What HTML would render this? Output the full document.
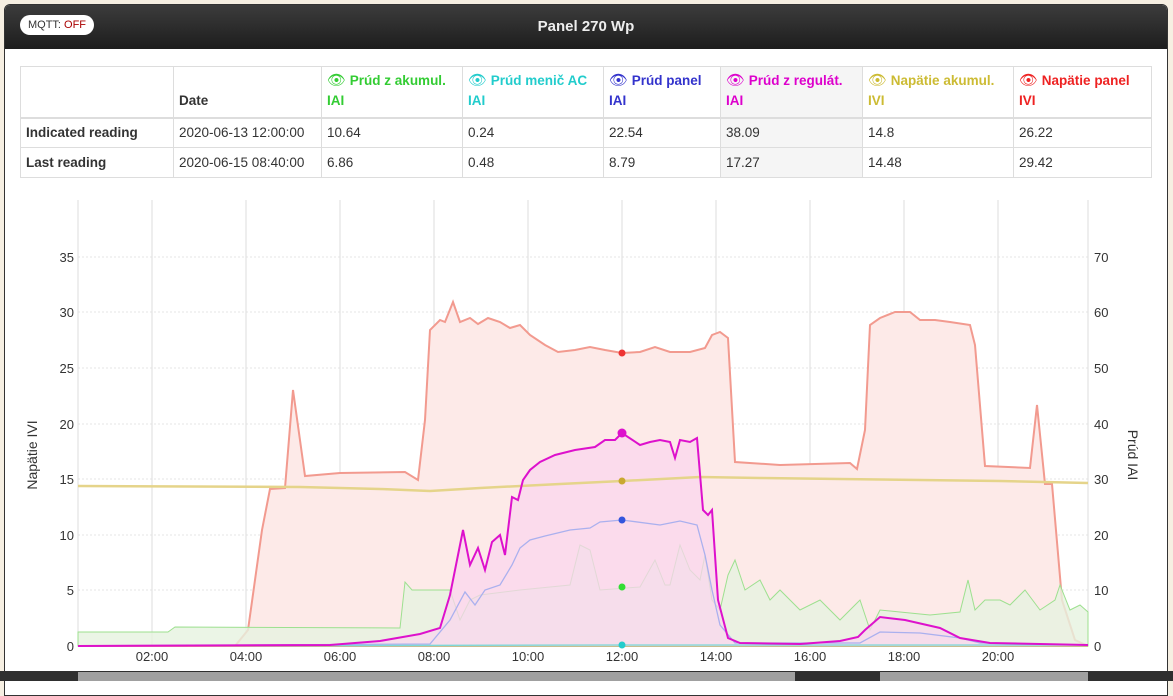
<!DOCTYPE html>
<html><head><meta charset="utf-8"><style>
html,body{margin:0;padding:0;width:1173px;height:681px;overflow:hidden;background:#f6efe2;font-family:"Liberation Sans",Arial,sans-serif}
.panel{position:absolute;left:4px;top:4px;width:1162px;height:690px;background:#fff;border:1px solid #333;border-radius:6px 6px 0 0;overflow:hidden}
.hdr{height:44px;background:linear-gradient(#3c3c3c,#1d1d1d);position:relative}
.hdr .t{position:absolute;left:0;right:0;top:13px;text-align:center;color:#eee;font-weight:bold;font-size:15px}
.pill{position:absolute;left:15px;top:10px;width:74px;height:20px;border-radius:10px;background:#fff;font-size:11px;line-height:20px;text-align:center;color:#333}
.pill b{font-weight:normal;color:#a00}
table{position:absolute;left:15px;top:61px;border-collapse:collapse;font-size:13.5px;color:#333}
td{border:1px solid #ddd;padding:0 5px;height:30px;vertical-align:middle;box-sizing:border-box}
tr.h td{height:51px;vertical-align:bottom;font-weight:bold;padding-bottom:6px;line-height:20px;border-bottom:2px solid #ddd}
.g{background:#f5f5f5}
.e{font-size:15px;font-weight:normal}
</style></head><body>
<div class="panel">
<div class="hdr"><div class="pill">MQTT: <b>OFF</b></div><div class="t">Panel 270 Wp</div></div>
<table>
<tr class="h"><td style="width:153px"></td><td style="width:148px">Date</td>
<td style="width:141px;color:#3c3"><span class="e">👁</span> Prúd z akumul.<br>IAI</td>
<td style="width:141px;color:#2cc"><span class="e">👁</span> Prúd menič AC<br>IAI</td>
<td style="width:117px;color:#33c"><span class="e">👁</span> Prúd panel<br>IAI</td>
<td class="g" style="width:142px;color:#d0c"><span class="e">👁</span> Prúd z regulát.<br>IAI</td>
<td style="width:151px;color:#cb3"><span class="e">👁</span> Napätie akumul.<br>IVI</td>
<td style="width:138px;color:#e22"><span class="e">👁</span> Napätie panel<br>IVI</td></tr>
<tr><td><b>Indicated reading</b></td><td>2020-06-13 12:00:00</td><td>10.64</td><td>0.24</td><td>22.54</td><td class="g">38.09</td><td>14.8</td><td>26.22</td></tr>
<tr><td><b>Last reading</b></td><td>2020-06-15 08:40:00</td><td>6.86</td><td>0.48</td><td>8.79</td><td class="g">17.27</td><td>14.48</td><td>29.42</td></tr>
</table>
</div>
<svg style="position:absolute;left:0;top:0" width="1173" height="681" font-family="Liberation Sans,Arial,sans-serif" font-size="13" fill="#333">
<g stroke="#e6e6e6" stroke-dasharray="2,2"><line x1="78" x2="1088" y1="590" y2="590"/><line x1="78" x2="1088" y1="535" y2="535"/><line x1="78" x2="1088" y1="479" y2="479"/><line x1="78" x2="1088" y1="424" y2="424"/><line x1="78" x2="1088" y1="368" y2="368"/><line x1="78" x2="1088" y1="312" y2="312"/><line x1="78" x2="1088" y1="257" y2="257"/></g>
<g stroke="#ddd"><line x1="78" x2="78" y1="200" y2="646"/><line x1="152" x2="152" y1="200" y2="646"/><line x1="246" x2="246" y1="200" y2="646"/><line x1="340" x2="340" y1="200" y2="646"/><line x1="434" x2="434" y1="200" y2="646"/><line x1="528" x2="528" y1="200" y2="646"/><line x1="622" x2="622" y1="200" y2="646"/><line x1="716" x2="716" y1="200" y2="646"/><line x1="810" x2="810" y1="200" y2="646"/><line x1="904" x2="904" y1="200" y2="646"/><line x1="998" x2="998" y1="200" y2="646"/><line x1="1088" x2="1088" y1="200" y2="646"/></g>
<polygon fill="#fdeae8" stroke="#f29a8f" stroke-width="2" points="78,646 235,646 248,630 262,530 270,489 285,488 293,390 305,476 340,473 405,472 418,480 425,420 430,330 440,320 445,322 453,302 460,322 470,318 478,324 488,318 500,322 510,328 520,325 530,335 545,345 558,352 575,350 590,347 605,350 622,353 640,352 655,347 670,352 690,352 705,348 712,335 720,332 728,338 735,462 780,465 850,463 857,469 865,430 870,325 880,318 895,312 910,312 920,320 935,320 950,322 970,325 975,345 985,466 1030,468 1037,405 1045,484 1052,484 1062,600 1075,640 1088,646"/>
<polygon fill="#e6f3e0" fill-opacity="0.8" stroke="#9de08f" points="78,646 78,632 168,632 175,627 400,628 405,582 412,590 450,590 460,620 470,600 480,595 520,590 540,588 570,585 580,545 590,550 600,590 640,587 655,560 665,585 670,585 680,545 690,570 700,580 705,555 712,600 720,610 728,575 735,560 745,590 760,580 770,600 780,590 800,610 820,600 840,620 855,605 860,600 870,630 880,610 900,612 930,615 960,612 968,580 975,610 985,600 1000,600 1010,605 1025,590 1040,610 1055,600 1060,585 1070,610 1080,605 1088,612 1088,646"/>
<polygon fill="#f9d5ee" fill-opacity="0.75" points="78,646 330,645 380,641 420,634 440,628 450,595 463,530 470,565 478,548 485,570 492,542 500,535 505,555 512,497 518,500 523,480 530,470 540,462 555,455 575,450 595,447 605,440 615,440 622,433 640,445 650,442 660,440 670,442 675,458 680,440 690,442 697,438 703,510 708,515 712,510 718,600 728,638 740,643 800,644 840,641 858,637 865,630 880,617 905,620 940,628 960,638 990,643 1088,645 1088,646"/>
<polyline fill="none" stroke="#e5d48a" stroke-width="2.5" points="78,486 300,487 380,489 430,491 480,488 560,484 622,481 700,477 760,478 840,479 920,480 1000,481 1088,483"/>
<polyline fill="none" stroke="#aab0ee" stroke-width="1.3" points="78,646 430,644 450,620 465,592 475,605 485,590 500,585 512,565 520,548 530,540 545,536 570,530 590,528 600,522 622,520 660,525 680,521 697,525 705,555 712,590 720,625 735,643 860,643 880,632 920,633 960,638 980,643 1088,645"/>
<polyline fill="none" stroke="#7ed8d8" stroke-width="1.3" points="78,646 600,645 622,645 1088,645"/>
<polyline fill="none" stroke="#dd11cc" stroke-width="2" points="78,646 330,645 380,641 420,634 440,628 450,595 463,530 470,565 478,548 485,570 492,542 500,535 505,555 512,497 518,500 523,480 530,470 540,462 555,455 575,450 595,447 605,440 615,440 622,433 640,445 650,442 660,440 670,442 675,458 680,440 690,442 697,438 703,510 708,515 712,510 718,600 728,638 740,643 800,644 840,641 858,637 865,630 880,617 905,620 940,628 960,638 990,643 1088,645"/>
<circle cx="622" cy="353" r="3.5" fill="#e33"/><circle cx="622" cy="433" r="4.5" fill="#dd11cc"/><circle cx="622" cy="481" r="3.5" fill="#c9a830"/><circle cx="622" cy="520" r="3.5" fill="#3355dd"/><circle cx="622" cy="587" r="3.5" fill="#3d3"/><circle cx="622" cy="645" r="3.5" fill="#2cc"/>
<g text-anchor="end"><text x="74" y="651">0</text><text x="74" y="595">5</text><text x="74" y="540">10</text><text x="74" y="484">15</text><text x="74" y="429">20</text><text x="74" y="373">25</text><text x="74" y="317">30</text><text x="74" y="262">35</text></g>
<g><text x="1094" y="651">0</text><text x="1094" y="595">10</text><text x="1094" y="540">20</text><text x="1094" y="484">30</text><text x="1094" y="429">40</text><text x="1094" y="373">50</text><text x="1094" y="317">60</text><text x="1094" y="262">70</text></g>
<g text-anchor="middle"><text x="152" y="661">02:00</text><text x="246" y="661">04:00</text><text x="340" y="661">06:00</text><text x="434" y="661">08:00</text><text x="528" y="661">10:00</text><text x="622" y="661">12:00</text><text x="716" y="661">14:00</text><text x="810" y="661">16:00</text><text x="904" y="661">18:00</text><text x="998" y="661">20:00</text></g>
<text transform="translate(37,455) rotate(-90)" text-anchor="middle" font-size="14">Napätie IVI</text>
<text transform="translate(1128,455) rotate(90)" text-anchor="middle" font-size="14">Prúd IAI</text>
<rect x="0" y="671" width="1173" height="10" fill="#2f2f2f"/>
<rect x="78" y="672" width="717" height="9" fill="#a0a0a0"/>
<rect x="880" y="672" width="208" height="9" fill="#a0a0a0"/>
</svg>
</body></html>
